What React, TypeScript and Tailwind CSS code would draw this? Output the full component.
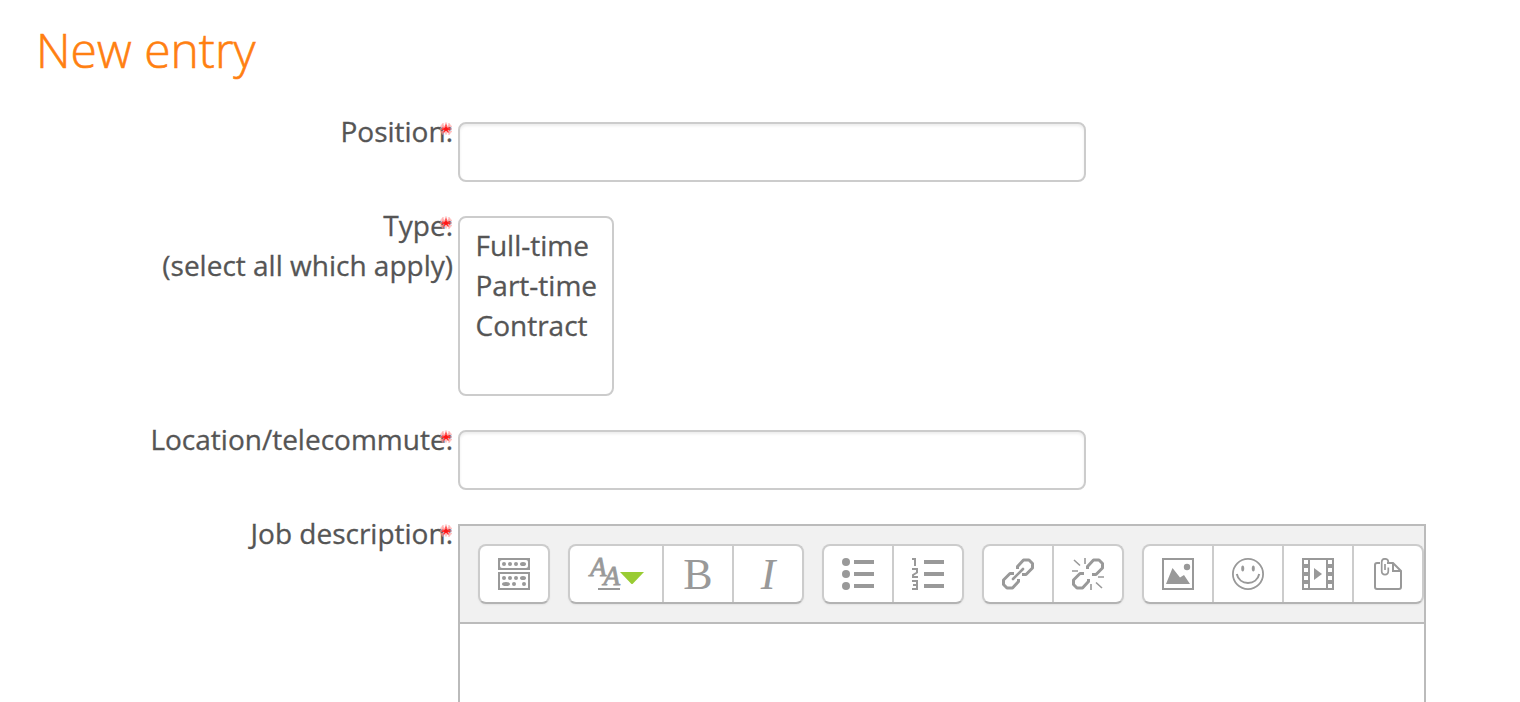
import type { ReactNode } from "react";

function RequiredMark() {
  return (
    <svg
      viewBox="0 0 14 14"
      className="absolute right-0 top-[11px] h-[14px] w-[14px]"
      aria-label="Required field"
    >
      <path d="M7 0.5v12M2.5 2.500l9 9M11.500 2.500l-9 9M1 7h12" stroke="#ff9c9c" strokeWidth="2.200" opacity="0.55" />
      <path d="M4 1v4M10 1v4M1 4.5h12M1 9.5h12M4 9v4M10 9v4" stroke="#ff9a9a" strokeWidth="1.4" opacity="0.6" />
      <path d="M7 2.500v6M3 5.800l8 1.800M11 5.800l-8 1.800M4.600 10.500 7 7l2.400 3.500" stroke="#ff2a2a" strokeWidth="1.300" fill="none" />
      <circle cx="7" cy="7" r="1.900" fill="#ff1515" />
    </svg>
  );
}

type FieldProps = {
  label: string;
  hint?: string;
  children: ReactNode;
};

function Field({ label, hint, children }: FieldProps) {
  return (
    <div className="flex items-start gap-[5px]">
      <div className="relative -mt-[11px] w-[453px] shrink-0 text-right">
        <p>{label}:</p>
        {hint ? <p>{hint}</p> : null}
        <RequiredMark />
      </div>
      {children}
    </div>
  );
}

function TextInput({ label }: { label: string }) {
  return (
    <input
      type="text"
      aria-label={label}
      className="h-[60px] w-[628px] rounded-lg border-2 border-[#ccc] bg-white px-4 shadow-[inset_0_2px_3px_rgba(0,0,0,0.075)] outline-none"
    />
  );
}

function Icon({ children }: { children: ReactNode }) {
  return (
    <svg viewBox="0 0 32 32" className="h-8 w-8 fill-[#999]">
      {children}
    </svg>
  );
}

function ToggleIcon() {
  return (
    <Icon>
      <path fillRule="evenodd" d="M0 0h32v12H0ZM4 2Q2 2 2 4v4q0 2 2 2h24q2 0 2-2V4q0-2-2-2Z" />
      <path fillRule="evenodd" d="M0 14h32v18H0ZM2 16v14h28V16Z" />
      <circle cx="6" cy="6" r="2" />
      <circle cx="12" cy="6" r="2" />
      <circle cx="18" cy="6" r="2" />
      <ellipse cx="25" cy="6" rx="3" ry="2" />
      <circle cx="6" cy="20" r="2" />
      <circle cx="12" cy="20" r="2" />
      <circle cx="18" cy="20" r="2" />
      <ellipse cx="25" cy="20" rx="3" ry="2" />
      <ellipse cx="8" cy="26" rx="4" ry="2" />
      <circle cx="16" cy="26" r="2" />
      <circle cx="26" cy="26" r="2" />
    </Icon>
  );
}

function StyleIcon() {
  return (
    <span className="relative block h-8 w-14 font-['Liberation_Serif',serif] italic leading-none text-[#999]">
      <span className="absolute left-[2px] top-[-4px] text-[27px] [-webkit-text-stroke:0.8px_#999]">A</span>
      <span className="absolute left-[15.5px] top-[5px] text-[27px] [-webkit-text-stroke:0.8px_#999]">A</span>
      <span className="absolute left-[10px] top-[30px] h-[2px] w-[22px] bg-[#999]" />
      <svg viewBox="0 0 24 12" className="absolute left-8 top-[14px] h-3 w-6 fill-[#9c3]">
        <path d="M0 0h24L13 11.5q-1 1-2 0Z" />
      </svg>
    </span>
  );
}

function BulletListIcon() {
  return (
    <Icon>
      <circle cx="4" cy="4" r="4" />
      <circle cx="4" cy="16" r="4" />
      <circle cx="4" cy="28" r="4" />
      <path d="M12 2h20v4H12zM12 14h20v4H12zM12 26h20v4H12z" />
    </Icon>
  );
}

function NumberListIcon() {
  return (
    <Icon>
      <path d="M12 2h20v4H12zM12 14h20v4H12zM12 26h20v4H12z" />
      <path
        d="M0 1h3v7M0 11h5v3.5L1 17v2h5M0 23h5v8H0M1 27h4"
        fill="none"
        stroke="#999"
        strokeWidth="2"
      />
    </Icon>
  );
}

const chainHalves =
  "M15.5 11V8.5L21.5 2H27l3.500 3.500V10l-6.500 6.500h-4M16.500 21v2.500L10.500 30H5l-3.500-3.500V22L8 15.500h4";

function LinkIcon() {
  return (
    <Icon>
      <path d={chainHalves} fill="none" stroke="#999" strokeWidth="3" strokeLinejoin="round" />
      <path d="m11 21 10-10" stroke="#999" strokeWidth="2.6" strokeLinecap="round" />
    </Icon>
  );
}

function UnlinkIcon() {
  return (
    <Icon>
      <path d={chainHalves} fill="none" stroke="#999" strokeWidth="3" strokeLinejoin="round" />
      <path d="m2 2 6 5.5M13 0v6M0 13h6M30 30l-6-5.5M19 32v-6M32 19h-6" stroke="#999" strokeWidth="1.6" />
    </Icon>
  );
}

function ImageIcon() {
  return (
    <Icon>
      <path fillRule="evenodd" d="M0 0h32v32H0ZM2 2v28h28V2Z" />
      <circle cx="25" cy="9" r="3.2" />
      <path d="m4 26 6.5-16 7.5 9.5 4-2.5 6 9Z" />
    </Icon>
  );
}

function EmoticonIcon() {
  return (
    <Icon>
      <circle cx="16" cy="16" r="15.1" fill="none" stroke="#999" strokeWidth="1.8" />
      <ellipse cx="10.7" cy="10.5" rx="1.5" ry="3" />
      <ellipse cx="21.3" cy="10.5" rx="1.5" ry="3" />
      <path d="M4.8 16C6 21.5 10.5 25 16 25s10-3.5 11.2-9" fill="none" stroke="#999" strokeWidth="2" />
    </Icon>
  );
}

function MediaIcon() {
  return (
    <Icon>
      <path
        fillRule="evenodd"
        d="M0 0h32v32H0ZM8 2v28h16V2ZM2 2v4h4V2ZM2 10v4h4v-4ZM2 18v4h4v-4ZM2 26v4h4v-4ZM26 2v4h4V2ZM26 10v4h4v-4ZM26 18v4h4v-4ZM26 26v4h4v-4Z"
      />
      <path d="m12 10 8 6-8 6Z" />
    </Icon>
  );
}

function FilesIcon() {
  return (
    <Icon>
      <path
        d="M8 5H5Q3 5 3 7v22q0 2 2 2h22q2 0 2-2V13l-8-8h-6"
        fill="none"
        stroke="#999"
        strokeWidth="2"
      />
      <path d="M21 5v8h8" fill="none" stroke="#999" strokeWidth="2" />
      <path
        d="M9.7 5V4q0-3.2 3.3-3.2T16.3 4M9.7 4.500V13q0 3.600 3.300 3.600t3.300-3.600V9.500M13 12V6"
        fill="none"
        stroke="#999"
        strokeWidth="1.7"
      />
    </Icon>
  );
}

function BoldIcon() {
  return (
    <span className="relative top-px font-['Liberation_Serif',serif] text-[44px] leading-[60px] text-[#999] [-webkit-text-stroke:0]">
      B
    </span>
  );
}

function ItalicIcon() {
  return (
    <span className="relative top-px font-['Liberation_Serif',serif] text-[44px] italic leading-[60px] text-[#999] [-webkit-text-stroke:0]">
      I
    </span>
  );
}

const toolbarGroups = [
  [{ title: "Toolbar toggle", icon: <ToggleIcon /> }],
  [
    { title: "Paragraph styles", icon: <StyleIcon />, wide: true },
    { title: "Bold", icon: <BoldIcon /> },
    { title: "Italic", icon: <ItalicIcon /> },
  ],
  [
    { title: "Unordered list", icon: <BulletListIcon /> },
    { title: "Ordered list", icon: <NumberListIcon /> },
  ],
  [
    { title: "Link", icon: <LinkIcon /> },
    { title: "Unlink", icon: <UnlinkIcon /> },
  ],
  [
    { title: "Image", icon: <ImageIcon /> },
    { title: "Emoticon", icon: <EmoticonIcon /> },
    { title: "Media", icon: <MediaIcon /> },
    { title: "Manage files", icon: <FilesIcon /> },
  ],
];

function Editor() {
  return (
    <div className="h-[300px] w-[968px] shrink-0 border-2 border-[#bbb] bg-white">
      <div className="flex h-[98px] gap-[18px] border-b-2 border-[#bbb] bg-[#f1f1f1] pl-[18px] pt-[18px]">
        {toolbarGroups.map((group) => (
          <div
            key={group[0].title}
            className="flex h-[60px] shrink-0 divide-x-2 divide-[#ccc] overflow-hidden rounded-lg border-2 border-[#ccc] border-b-[#b3b3b3] bg-white shadow-[0_1px_2px_rgba(0,0,0,0.06)]"
          >
            {group.map((button) => (
              <button
                key={button.title}
                title={button.title}
                className={`box-content flex h-14 items-center justify-center ${
                  "wide" in button ? "w-[92px]" : "w-[68px]"
                }`}
              >
                {button.icon}
              </button>
            ))}
          </div>
        ))}
      </div>
    </div>
  );
}

export default function App() {
  return (
    <main className="h-[702px] overflow-hidden bg-white font-['Open_Sans',sans-serif] text-[28px] leading-10 text-[#555] [-webkit-text-stroke:0.3px_currentColor]">
      <h1 className="h-[122px] pl-9 pt-[18px] text-[48px] font-light leading-[64px] text-[#ff7f11] [-webkit-text-stroke:0.6px_currentColor]">
        New entry
      </h1>

      <form className="flex flex-col gap-[34px]">
        <Field label="Position">
          <TextInput label="Position" />
        </Field>

        <Field label="Type" hint="(select all which apply)">
          <ul className="h-[180px] w-[156px] rounded-lg border-2 border-[#ccc] bg-white pl-[15.5px] pt-[7px]">
            <li>Full-time</li>
            <li>Part-time</li>
            <li>Contract</li>
          </ul>
        </Field>

        <Field label="Location/telecommute">
          <TextInput label="Location/telecommute" />
        </Field>

        <Field label="Job description">
          <Editor />
        </Field>
      </form>
    </main>
  );
}
